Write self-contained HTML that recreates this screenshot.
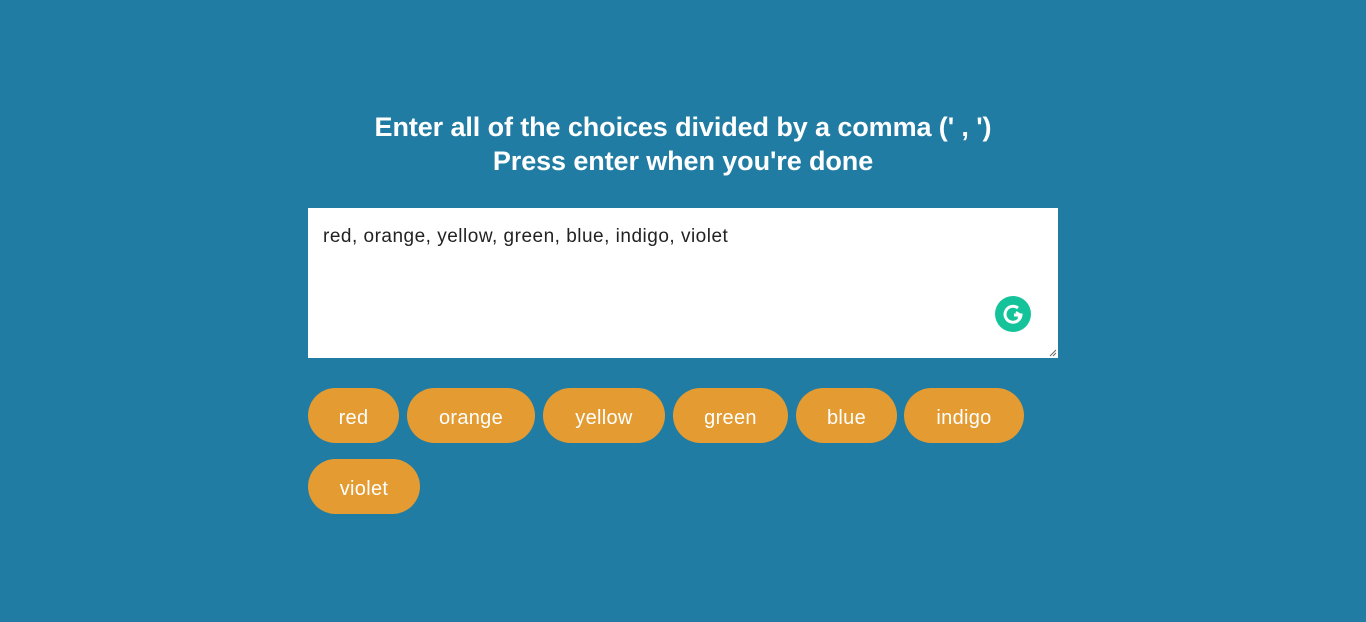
<!DOCTYPE html>
<html><head><meta charset="utf-8"><style>
html,body{margin:0;padding:0;width:1366px;height:622px;background:#217ca3;overflow:hidden;font-family:"Liberation Sans",sans-serif;}
h1{position:absolute;top:110px;left:0;width:1366px;margin:0;text-align:center;color:#fff;font-size:27px;line-height:34px;font-weight:bold;letter-spacing:-0.1px;}
.ta{position:absolute;left:308px;top:208px;width:750px;height:150px;background:#fff;}
.ta span{position:absolute;left:15px;top:18px;font-size:19px;color:#222;letter-spacing:0.5px;}
.g{position:absolute;left:995px;top:296px;width:36px;height:36px;border-radius:50%;background:#15c39a;}
.t{position:absolute;height:55px;border-radius:28px;background:#e39b32;color:#fff;font-size:20px;line-height:60px;text-align:center;letter-spacing:0.3px;}
</style></head><body>
<h1>Enter all of the choices divided by a comma (' , ')<br>Press enter when you're done</h1>
<div class="ta"><span>red, orange, yellow, green, blue, indigo, violet</span>
<svg style="position:absolute;right:1px;bottom:1px" width="8" height="8"><path d="M1 7L7 1M4 7L7 4" stroke="#666" stroke-width="1"/></svg></div>
<div class="g"><svg width="36" height="36"><path d="M23 12A8 8 0 1 0 26 19H19" fill="none" stroke="#fff" stroke-width="3"/><path d="M21 16L26 19L23 22" fill="none" stroke="#fff" stroke-width="2"/></svg></div>
<div class="t" style="left:308px;top:388px;width:91px">red</div>
<div class="t" style="left:407px;top:388px;width:128px">orange</div>
<div class="t" style="left:543px;top:388px;width:122px">yellow</div>
<div class="t" style="left:673px;top:388px;width:115px">green</div>
<div class="t" style="left:796px;top:388px;width:101px">blue</div>
<div class="t" style="left:904px;top:388px;width:120px">indigo</div>
<div class="t" style="left:308px;top:459px;width:112px">violet</div>
</body></html>
